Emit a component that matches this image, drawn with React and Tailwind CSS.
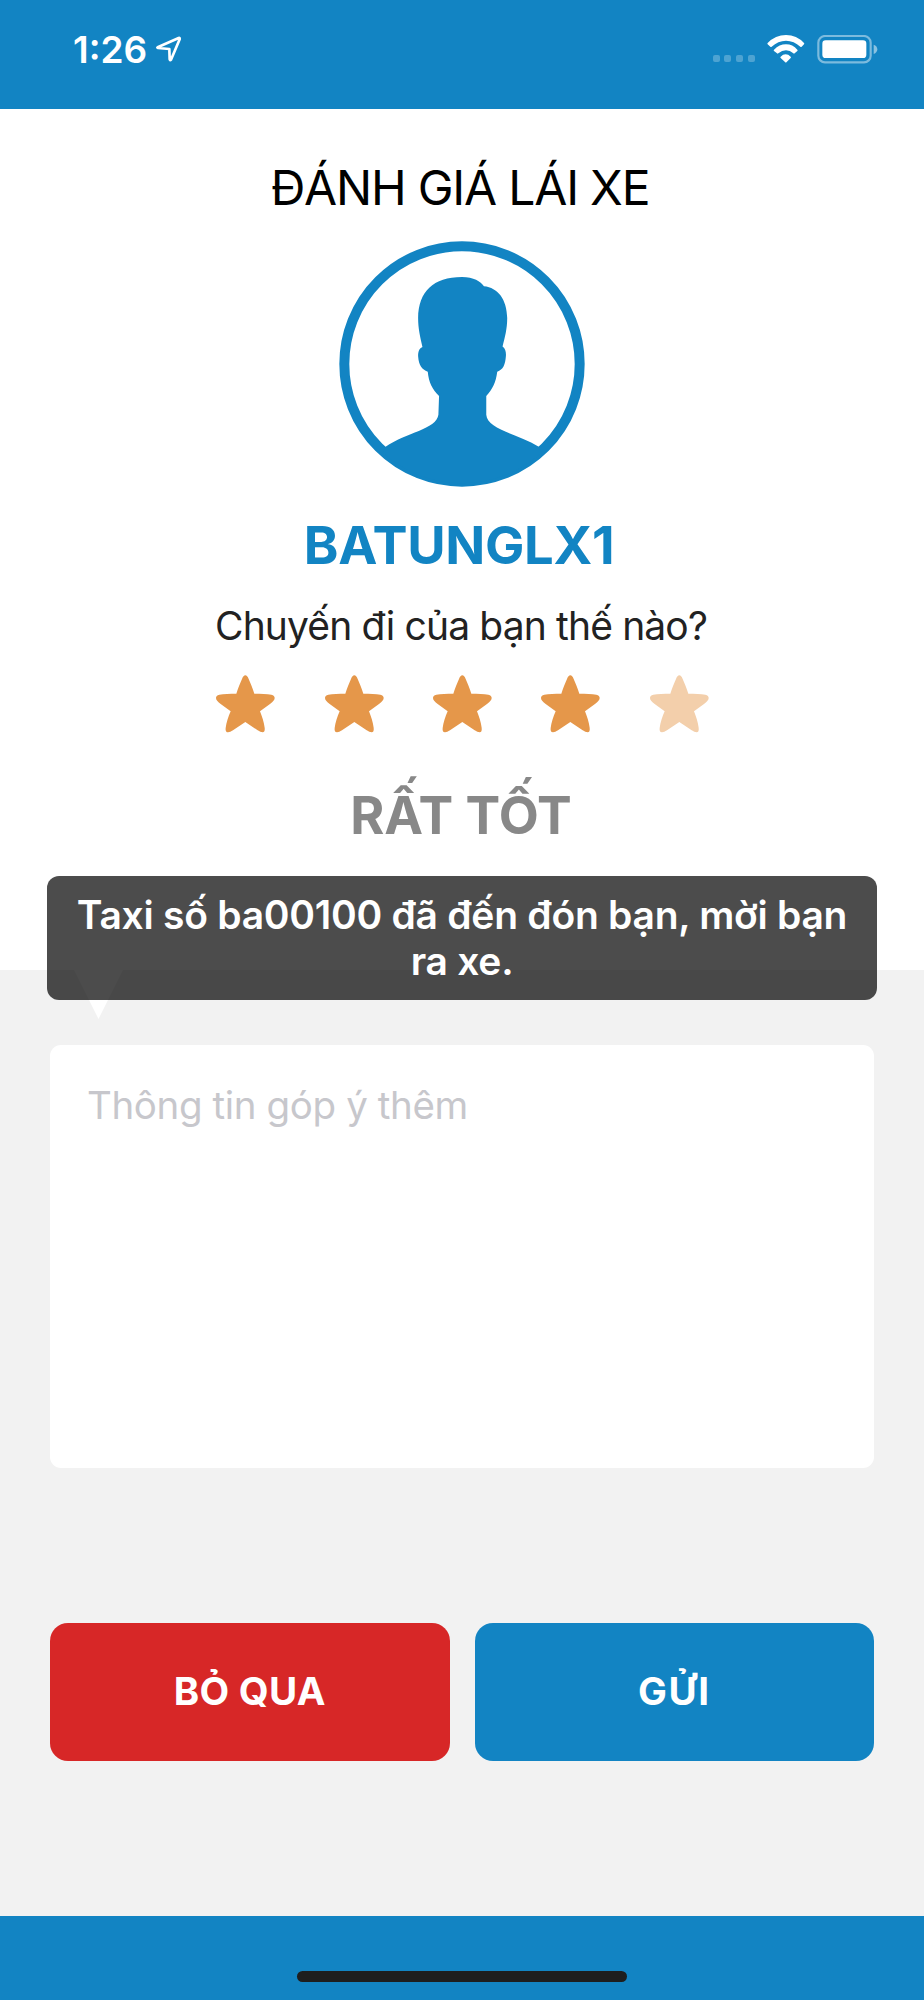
import { useState } from "react";

const LABELS = ["RẤT TỆ", "TỆ", "BÌNH THƯỜNG", "RẤT TỐT", "TUYỆT VỜI"];

export default function DriverRating() {
  const [rating, setRating] = useState(4);

  return (
    <div className="relative flex h-[2000px] w-[924px] flex-col overflow-hidden bg-[#f2f2f2] font-['Inter',sans-serif]">
      <StatusBar />

      {/* Driver info */}
      <section className="flex h-[861px] shrink-0 flex-col items-center bg-white pt-[51px]">
        <h1 className="pr-1 text-[48px] leading-[56px] tracking-[-1.2px] whitespace-nowrap text-black">
          ĐÁNH GIÁ LÁI XE
        </h1>

        <Avatar />

        <h2 className="mt-[26px] pr-1.5 text-[52.5px] leading-[64px] font-bold tracking-[-0.3px] whitespace-nowrap text-[#1284c3]">
          BATUNGLX1
        </h2>
        <p className="mt-[25px] pr-0.5 text-[39px] leading-[48px] tracking-[-0.86px] whitespace-nowrap text-[#222222]">
          Chuyến đi của bạn thế nào?
        </p>

        {/* Stars */}
        <div className="mt-[25px] flex gap-[48.3px]">
          {[1, 2, 3, 4, 5].map((n) => (
            <button key={n} onClick={() => setRating(n)}>
              <Star active={n <= rating} />
            </button>
          ))}
        </div>

        <p className="mt-[51px] pr-0.5 text-[52px] leading-[64px] font-bold whitespace-nowrap text-[#888888]">
          {LABELS[rating - 1]}
        </p>
      </section>

      {/* Comment */}
      <section className="flex grow flex-col px-[50px]">
        <svg className="ml-6 h-[49px] w-[49px]" viewBox="0 0 49 49">
          <path d="M0 0H49L24.5 49Z" fill="#fff" />
        </svg>
        <textarea
          placeholder="Thông tin góp ý thêm"
          className="mt-[26px] h-[423px] w-full resize-none rounded-[11px] bg-white px-[37px] pt-9 text-[38.5px] leading-[48px] tracking-[-0.38px] outline-none placeholder:text-[#c7c7cc]"
        />

        <div className="mt-[155px] flex gap-[25px]">
          <button className="h-[138px] flex-1 rounded-[18px] bg-[#d72727] text-[38.5px] font-bold tracking-[0.3px] text-white">
            BỎ QUA
          </button>
          <button className="h-[138px] flex-1 rounded-[18px] bg-[#1284c3] text-[38.5px] font-bold tracking-[1.6px] text-white">
            GỬI
          </button>
        </div>
      </section>

      {/* Home indicator */}
      <footer className="flex h-[84px] shrink-0 justify-center bg-[#1284c3] pt-[55px]">
        <div className="h-[11px] w-[330px] rounded-full bg-[#1e1e1e]" />
      </footer>

      {/* Toast */}
      <div className="absolute top-[876px] left-[47px] h-[124px] w-[830px] rounded-[12px] bg-black/70 pt-[15.5px] text-center text-[39px] leading-[46.5px] font-semibold tracking-[-0.26px] whitespace-nowrap text-white">
        Taxi số ba00100 đã đến đón bạn, mời bạn
        <br />
        ra xe.
      </div>
    </div>
  );
}

function StatusBar() {
  return (
    <header className="flex h-[109px] shrink-0 items-start bg-[#1284c3] pl-[73px] text-white">
      <span className="mt-7 w-[83px] text-[37px] leading-[44px] font-semibold whitespace-nowrap">
        1:26
      </span>
      <svg className="mt-9 h-[27px] w-[26px]" viewBox="469 108 78 81">
        <path
          d="M474 142L537 114Q541 113 540 118L514 179Q511 183 510 178L509 147L475 144Q472 143 474 142Z"
          fill="none"
          stroke="currentColor"
          strokeWidth="8"
          strokeLinejoin="round"
        />
      </svg>

      <div className="mt-[55px] ml-auto flex gap-[4.6px]">
        <span className="size-[7px] rounded-[2px] bg-white/25" />
        <span className="size-[7px] rounded-[2px] bg-white/25" />
        <span className="size-[7px] rounded-[2px] bg-white/25" />
        <span className="size-[7px] rounded-[2px] bg-white/25" />
      </div>
      <svg
        className="mt-[35px] ml-[12.5px] h-[28px] w-[38px]"
        viewBox="231 105 114 84"
        fill="currentColor"
      >
        <path d="M233 129Q256 105 288 105T342 129Q344 131 342 133L335 140Q333 142 331 140Q312 122 288 122T245 140Q243 142 241 140L233 133Q231 131 233 129Z" />
        <path d="M252 149Q268 133 288 133T322 149Q324 151 322 153L314 160Q312 162 310 160Q300 151 288 151T265 160Q263 162 261 160L252 153Q250 151 252 149Z" />
        <path d="M272 170Q279 163 287 163T302 170Q304 172 302 174L290 186Q287 189 285 186L272 174Q270 172 272 170Z" />
      </svg>
      <svg
        className="mt-[35px] mr-[46px] ml-[12px] h-[29px] w-[61px]"
        viewBox="380 105 183 87"
      >
        <rect
          x="384"
          y="108"
          width="157"
          height="79"
          rx="20"
          fill="none"
          stroke="#fff"
          strokeOpacity="0.45"
          strokeWidth="6.500"
        />
        <rect x="396" y="121" width="132" height="53" rx="10" fill="#fff" />
        <path d="M550 134Q561 138 561 148T550 162Z" fill="#fff" fillOpacity="0.5" />
      </svg>
    </header>
  );
}

function Avatar() {
  return (
    <svg
      className="mt-[25px] h-[246px] w-[246px] shrink-0"
      viewBox="268 303 738 740"
      fill="#1284c3"
    >
      <circle cx="637" cy="673" r="354" fill="#fff" stroke="#1284c3" strokeWidth="30" />
      <path d="M637 411C672 411 693 424 703 439C745 443 772 478 773 535C773 567 766 594 759 620C768 627 770 637 769 650C767 675 761 691 743 696C739 728 728 750 710 769V826C713 870 801 882 868 922L876 940A358 358 0 0 1 398 940L407 922C468 880 560 870 566 826L568 769C548 750 537 728 534 696C516 690 507 677 505 650C505 637 507 627 518 622C511 590 505 567 505 535C506 455 550 411 637 411Z" />
    </svg>
  );
}

function Star({ active }) {
  return (
    <svg className="h-[58px] w-[60px]" viewBox="47 524 180 174">
      <path
        d="M138 525C142 525 145 529 148 536C154 549 160 565 165 580C184 580 203 581 216 583C223 584 226 588 226 593C226 599 221 604 213 610L182 633C188 648 194 666 196 682C197 691 195 696 190 696C185 696 181 694 175 690L138 665L101 690C95 694 91 696 86 696C80 696 78 691 79 683C81 666 87 649 94 633L63 610C55 604 50 599 50 593C50 588 53 584 60 583C73 581 92 580 111 580C116 565 122 549 128 536C131 529 134 525 138 525Z"
        fill={active ? "#e5974a" : "#f3cfab"}
      />
    </svg>
  );
}
